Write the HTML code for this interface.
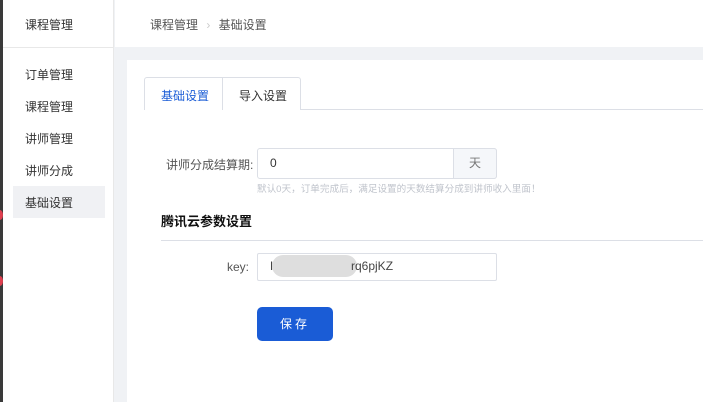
<!DOCTYPE html><html><head><meta charset="utf-8"><style>
*{margin:0;padding:0;box-sizing:border-box}
body{width:703px;height:402px;overflow:hidden;position:relative;background:#f0f2f5;font-family:"Liberation Sans","Noto Sans CJK SC",sans-serif;font-size:12px;color:#333}
.a{position:absolute}
</style></head><body>
<div class="a" style="left:0;top:0;width:3px;height:402px;background:#3a3a3a"></div>
<div class="a" style="left:-3px;top:210px;width:6px;height:10px;border-radius:50%;background:#e04050"></div>
<div class="a" style="left:-3px;top:276px;width:6px;height:10px;border-radius:50%;background:#e04050"></div>
<div class="a" style="left:3px;top:0;width:111px;height:402px;background:#fff;border-right:1px solid #e8e8e8"></div>
<div class="a" style="left:3px;top:47px;width:111px;height:1px;background:#e8e8e8"></div>
<div class="a" style="left:25px;top:16px;color:#333">课程管理</div>
<div class="a" style="left:25px;top:66px">订单管理</div>
<div class="a" style="left:25px;top:98px">课程管理</div>
<div class="a" style="left:25px;top:130px">讲师管理</div>
<div class="a" style="left:25px;top:162px">讲师分成</div>
<div class="a" style="left:13px;top:186px;width:92px;height:32px;background:#f0f1f4"></div>
<div class="a" style="left:25px;top:194px">基础设置</div>
<div class="a" style="left:115px;top:0;width:588px;height:47px;background:#fff"></div>
<div class="a" style="left:150px;top:16px;color:#555">课程管理 <span style="color:#ccc;margin:0 5px">›</span> 基础设置</div>
<div class="a" style="left:127px;top:60px;width:576px;height:342px;background:#fff"></div>
<div class="a" style="left:144px;top:109px;width:559px;height:1px;background:#dcdfe6"></div>
<div class="a" style="left:144px;top:77px;width:157px;height:33px;border:1px solid #dcdfe6;border-bottom:none;border-radius:3px 3px 0 0;background:#fff"></div>
<div class="a" style="left:222px;top:77px;width:1px;height:33px;background:#dcdfe6"></div>
<div class="a" style="left:161px;top:87px;color:#1a5cd6">基础设置</div>
<div class="a" style="left:239px;top:87px;color:#333">导入设置</div>
<div class="a" style="left:166px;top:156px;color:#555">讲师分成结算期:</div>
<div class="a" style="left:257px;top:148px;width:240px;height:31px;border:1px solid #dcdfe6;border-radius:3px;background:#fff"></div>
<div class="a" style="left:453px;top:148px;width:44px;height:31px;border:1px solid #dcdfe6;border-radius:0 3px 3px 0;background:#f5f7fa;color:#777;text-align:center;line-height:29px">天</div>
<div class="a" style="left:270px;top:156px">0</div>
<div class="a" style="left:257px;top:181px;font-size:9.6px;color:#c0c4cc">默认0天，订单完成后，满足设置的天数结算分成到讲师收入里面！</div>
<div class="a" style="left:161px;top:211px;font-size:13px;font-weight:bold;color:#111">腾讯云参数设置</div>
<div class="a" style="left:161px;top:240px;width:542px;height:1px;background:#dcdfe6"></div>
<div class="a" style="left:227px;top:260px;color:#555">key:</div>
<div class="a" style="left:257px;top:253px;width:240px;height:28px;border:1px solid #dcdfe6;border-radius:2px;background:#fff"></div>
<div class="a" style="left:270px;top:259px;color:#444">K</div>
<div class="a" style="left:272px;top:255px;width:85px;height:22px;border-radius:11px;background:#dedede"></div>
<div class="a" style="left:351px;top:259px;color:#444">rq6pjKZ</div>
<div class="a" style="left:257px;top:307px;width:76px;height:34px;border-radius:5px;background:#1a5cd6;color:#fff;text-align:center;line-height:34px;letter-spacing:3px">保存</div>
</body></html>
